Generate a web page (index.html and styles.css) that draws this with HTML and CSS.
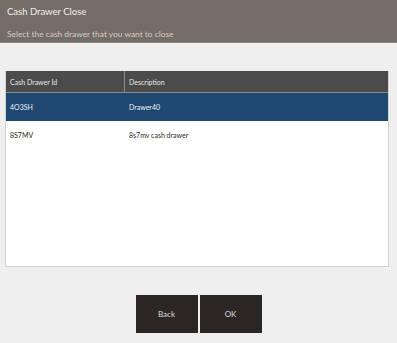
FILE: index.html
```html
<!DOCTYPE html>
<html>
<head>
<meta charset="utf-8">
<link rel="stylesheet" href="styles.css">
</head>
<body>
<div class="header">
  <div class="title">Cash Drawer Close</div>
  <div class="subtitle">Select the cash drawer that you want to close</div>
</div>
<div class="content">
  <div class="table">
    <div class="row head">
      <div class="cell c1">Cash Drawer Id</div>
      <div class="cell c2">Description</div>
    </div>
    <div class="row selected">
      <div class="cell c1">4O3SH</div>
      <div class="cell c2">Drawer40</div>
    </div>
    <div class="row">
      <div class="cell c1">8S7MV</div>
      <div class="cell c2">8s7mv cash drawer</div>
    </div>
  </div>
  <div class="buttons">
    <div class="btn">Back</div>
    <div class="btn">OK</div>
  </div>
</div>
</body>
</html>
```
FILE: styles.css
```css
html, body {
  margin: 0;
  padding: 0;
  background: #efefef;
  font-family: Lato, "Open Sans", "Liberation Sans", sans-serif;
}
.header {
  height: 43px;
  background: #746c67;
  box-sizing: border-box;
  padding: 5px 0 0 7px;
  border-bottom: 1px solid #8e8781;
}
.title {
  color: #f2f0ee;
  font-size: 9.5px;
  line-height: 14px;
}
.subtitle {
  color: #d2cdc9;
  font-size: 8.4px;
  line-height: 14px;
  margin-top: 8px;
}
.content {
  padding: 28px 8px 0 5px;
}
.table {
  height: 196px;
  background: #ffffff;
  border: 1px solid #d2d2d2;
  border-top: none;
  box-sizing: border-box;
}
.row {
  display: grid;
  grid-template-columns: 119px 1fr;
  height: 28px;
  align-items: center;
  font-size: 7px;
  color: #2a2a2a;
}
.row.head {
  height: 21px;
  background: #4b4b4b;
  color: #e8e8e8;
  border-bottom: 1px solid #8a8a8a;
  align-items: stretch;
}
.row.selected {
  background: #1e4870;
  color: #eef2f6;
}
.cell {
  padding-left: 4px;
  display: flex;
  align-items: center;
  box-sizing: border-box;
}
.head .c1 {
  border-right: 1px solid #8a8a8a;
}
.c2 {
  padding-left: 4px;
}
.buttons {
  display: flex;
  justify-content: center;
  gap: 2px;
  margin-top: 28px;
  padding-left: 3px;
}
.btn {
  width: 62px;
  height: 38px;
  background: #2b2725;
  color: #dcdcdc;
  font-size: 8px;
  display: flex;
  align-items: center;
  justify-content: center;
}
```
